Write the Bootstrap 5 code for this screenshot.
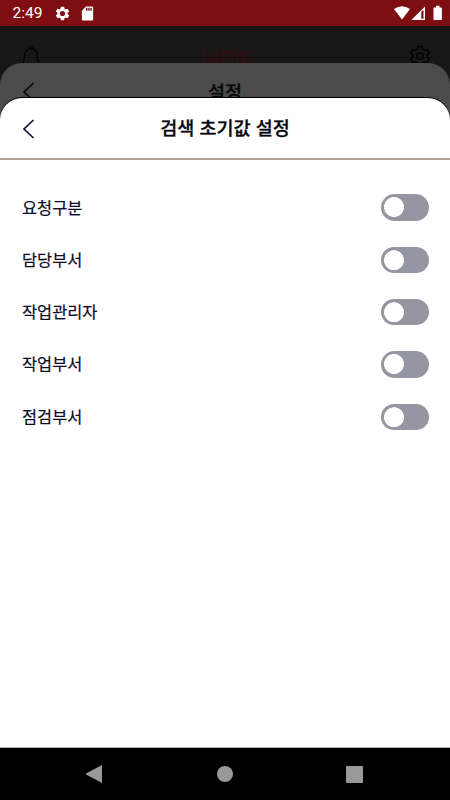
<!DOCTYPE html>
<html lang="ko">
<head>
<meta charset="utf-8">
<meta name="viewport" content="width=device-width, initial-scale=1">
<title>검색 초기값 설정</title>
<link href="https://cdn.jsdelivr.net/npm/bootstrap@5.3.0/dist/css/bootstrap.min.css" rel="stylesheet">
<style>
body{font-family:"Noto Sans CJK KR",sans-serif;color:#0c0c28}
svg{display:block}
.screen{width:450px;height:800px;background:#000}
.statusbar{height:26px;background:#7f0e12;color:#fff;padding:0 8px 0 12.5px}
.clock{font:400 15.5px/28px Roboto,sans-serif;width:41px;white-space:nowrap}
.stage{background:#171717}
.topbar{height:60px;padding:0 19px 0 20px}
.brand{font:600 21.500px/57px "Open Sans",sans-serif;color:#300c0e;letter-spacing:-.5px;height:60px}
.sheet{left:0;right:0;bottom:0;border-radius:22px 22px 0 0}
.sheet-back{top:36.5px;background:#4b4b4b;color:#08080c}
.sheet-front{top:72px;background:#fff;box-shadow:0 -1px 0 #000;border-bottom:1px solid #aaa}
.sheet-head{height:62px;padding:0 22px;display:grid;grid-template-columns:24px 1fr 24px;align-items:center}
.sheet-back .sheet-head{height:59px}
.sheet-front .sheet-head{border-bottom:2px solid #b79c9c}
.sheet-title{font-size:18.5px;line-height:28px;font-weight:500;text-align:center;padding-bottom:2px;-webkit-text-stroke:.3px currentColor}
.sheet-front .sheet-title{color:#050510}
.sheet-front .chevron{margin-top:1px}
.options{padding:21.5px 21px 0 22px}
.option{height:52.3px;font-size:16.4px;-webkit-text-stroke:.2px currentColor}
.option span{padding-bottom:1.5px}
.option .form-check-input{width:48px;height:26.5px;margin:0;float:none;border:0;border-radius:14px;background-color:#9596a2;background-image:radial-gradient(circle at 13px 13.25px,#fff 9.6px,transparent 10.3px)}
.navkeys{height:52px;padding:0 87px 0 85px}
</style>
</head>
<body>
<div class="screen d-flex flex-column overflow-hidden">
  <header class="statusbar d-flex align-items-center">
    <span class="clock">2:49</span>
    <svg width="17" height="17" viewBox="0 0 24 24" fill="#fff"><path d="M19.14 12.94c.04-.3.06-.61.06-.94s-.02-.64-.07-.94l2.03-1.58a.49.49 0 0 0 .12-.61l-1.92-3.32a.49.49 0 0 0-.59-.22l-2.39.96a7 7 0 0 0-1.62-.94l-.36-2.54a.48.48 0 0 0-.48-.41h-3.84a.48.48 0 0 0-.47.41l-.36 2.54c-.59.24-1.13.57-1.62.94l-2.39-.96a.48.48 0 0 0-.59.22L2.74 8.87a.48.48 0 0 0 .12.61l2.03 1.58a6 6 0 0 0 0 1.88l-2.03 1.58a.49.49 0 0 0-.12.61l1.92 3.32c.12.22.37.29.59.22l2.39-.96c.5.38 1.03.7 1.62.94l.36 2.54c.05.24.24.41.48.41h3.84c.24 0 .44-.17.47-.41l.36-2.54a7 7 0 0 0 1.62-.94l2.39.96c.22.08.47 0 .59-.22l1.92-3.32a.48.48 0 0 0-.12-.61zM12 15.6a3.6 3.6 0 1 1 0-7.200 3.600 3.600 0 0 1 0 7.200z"/></svg>
    <svg class="ms-2" width="17" height="17" viewBox="0 0 24 24" fill="#fff"><path d="M18 2h-8L4 8v12c0 1.100.9 2 2 2h12c1.100 0 2-.9 2-2V4c0-1.100-.9-2-2-2zm-6 6h-2V4h2zm3 0h-2V4h2zm3 0h-2V4h2z"/></svg>
    <svg class="ms-auto" width="49" height="16" viewBox="0 0 49 16" fill="#fff"><path d="M1 4Q9-1.700 17 4L9 14.500z"/><path fill-rule="evenodd" d="M18.300 15 32 1.500V15zM28.300 6.700V13.800h2.200V5z"/><path d="M43 .8h3.500v1.600h1.700c.4 0 .7.300.7.700v11.200c0 .4-.3.700-.7.700h-7c-.4 0-.7-.3-.7-.7V3.100c0-.4.300-.7.700-.7H43z"/></svg>
  </header>
  <main class="stage position-relative flex-grow-1">
    <div class="topbar d-flex align-items-center justify-content-between">
      <svg width="22" height="24" viewBox="0 0 22 24" fill="none" stroke="#050505" stroke-width="1.500"><path d="M2 20c2-2 2.500-4 2.500-9a6.300 6.300 0 0 1 12.600 0c0 5 .5 7 2.500 9zM9 4.500c0-3 3.500-3 3.500 0M8.500 21c.5 2.500 4 2.500 4.500 0"/></svg>
      <div class="brand">lump</div>
      <svg width="22" height="22" viewBox="0 0 22 22" fill="none" stroke="#050505" stroke-width="1.700" stroke-linejoin="round"><path d="M9 1.500h4l.7 2.700 2 1.100 2.700-.7 2 3.400-2 2v2l2 2-2 3.400-2.700-.7-2 1.100-.7 2.700H9l-.7-2.700-2-1.100-2.700.7-2-3.400 2-2v-2l-2-2 2-3.400 2.700.7 2-1.100z"/><circle cx="11" cy="11" r="3.200"/></svg>
    </div>
    <section class="sheet sheet-back position-absolute">
      <div class="sheet-head">
        <svg width="13" height="20" viewBox="0 0 13 20" fill="none" stroke="#08080c" stroke-width="1.700"><path d="M11.500 1 2 10l9.500 9"/></svg>
        <div class="sheet-title">설정</div>
      </div>
    </section>
    <section class="sheet sheet-front position-absolute">
      <div class="sheet-head">
        <svg class="chevron" width="13" height="20" viewBox="0 0 13 20" fill="none" stroke="#10103a" stroke-width="1.700"><path d="M11.500 1 2 10l9.500 9"/></svg>
        <h1 class="sheet-title m-0">검색 초기값 설정</h1>
      </div>
      <div class="options">
        <label class="option d-flex align-items-center justify-content-between"><span>요청구분</span><input class="form-check-input" type="checkbox" role="switch"></label>
        <label class="option d-flex align-items-center justify-content-between"><span>담당부서</span><input class="form-check-input" type="checkbox" role="switch"></label>
        <label class="option d-flex align-items-center justify-content-between"><span>작업관리자</span><input class="form-check-input" type="checkbox" role="switch"></label>
        <label class="option d-flex align-items-center justify-content-between"><span>작업부서</span><input class="form-check-input" type="checkbox" role="switch"></label>
        <label class="option d-flex align-items-center justify-content-between"><span>점검부서</span><input class="form-check-input" type="checkbox" role="switch"></label>
      </div>
    </section>
  </main>
  <nav class="navkeys d-flex align-items-center justify-content-between">
    <svg width="18" height="18" viewBox="0 0 18 18" fill="#999"><path d="M17 0v18L1 9.500V8.500z"/></svg>
    <svg width="16" height="16" viewBox="0 0 16 16" fill="#999"><circle cx="8" cy="8" r="8"/></svg>
    <svg width="17" height="17" viewBox="0 0 17 17" fill="#999"><rect width="17" height="17" rx="1"/></svg>
  </nav>
</div>
<script src="https://cdn.jsdelivr.net/npm/bootstrap@5.3.0/dist/js/bootstrap.bundle.min.js"></script>
</body>
</html>
